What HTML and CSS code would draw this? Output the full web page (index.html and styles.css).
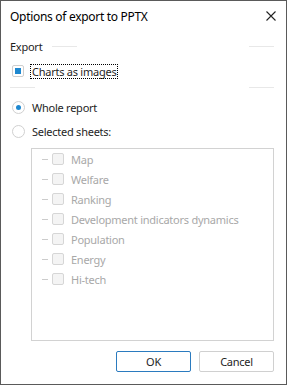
FILE: index.html
```html
<!DOCTYPE html>
<html lang="en">
<head>
    <meta charset="UTF-8">
    <title>Options of export to PPTX</title>
    <link rel="stylesheet" href="styles.css">
</head>
<body>
    <div class="dialog">
        <div class="titlebar">
            <span class="title">Options of export to PPTX</span>
            <svg class="close" width="10" height="10" viewBox="0 0 10 10">
                <path d="M0.5 0.5 L9.5 9.5 M9.5 0.5 L0.5 9.5" stroke="#222" stroke-width="1.1" fill="none"/>
            </svg>
        </div>
        <div class="content">
            <div class="legend">
                <span>Export</span>
                <span class="seg seg-after"></span>
                <span class="fill"></span>
                <span class="seg"></span>
            </div>
            <div class="check-row">
                <span class="check checked"></span>
                <span class="focus">Charts as images</span>
            </div>
            <div class="rule">
                <span class="seg"></span>
                <span class="fill"></span>
                <span class="seg"></span>
            </div>
            <div class="radio-row">
                <span class="radio selected"></span>
                <span>Whole report</span>
            </div>
            <div class="radio-row">
                <span class="radio"></span>
                <span>Selected sheets:</span>
            </div>
            <div class="sheets">
                <div class="sheet"><span class="dash"></span><span class="check"></span>Map</div>
                <div class="sheet"><span class="dash"></span><span class="check"></span>Welfare</div>
                <div class="sheet"><span class="dash"></span><span class="check"></span>Ranking</div>
                <div class="sheet"><span class="dash"></span><span class="check"></span>Development indicators dynamics</div>
                <div class="sheet"><span class="dash"></span><span class="check"></span>Population</div>
                <div class="sheet"><span class="dash"></span><span class="check"></span>Energy</div>
                <div class="sheet"><span class="dash"></span><span class="check"></span>Hi-tech</div>
            </div>
            <div class="buttons">
                <button class="btn default">OK</button>
                <button class="btn">Cancel</button>
            </div>
        </div>
    </div>
</body>
</html>
```

FILE: styles.css
```css
body {
    margin: 0;
    font-family: "Noto Sans", sans-serif;
    font-size: 11px;
    letter-spacing: -0.25px;
    color: #1e1e1e;
    background: #fff;
}
.dialog {
    width: 287px;
    height: 385px;
    box-sizing: border-box;
    border: 1px solid #5a5a5a;
    background: #fff;
}
.titlebar {
    height: 30px;
    display: flex;
    align-items: center;
    padding: 0 10px 0 9px;
}
.title {
    flex: 1;
    font-size: 12px;
    letter-spacing: -0.3px;
    color: #000;
}
.content {
    padding: 0 12px 0 9px;
}
.legend {
    display: flex;
    align-items: center;
    height: 20px;
    margin-top: 5px;
}
.seg {
    width: 25px;
    height: 1px;
    background: #e8e8e8;
}
.seg-after {
    margin-left: 10px;
}
.fill {
    flex: 1;
}
.check-row {
    display: flex;
    align-items: center;
    height: 30px;
    padding-left: 2px;
}
.check {
    width: 10px;
    height: 10px;
    border: 1px solid #cfcfcf;
    border-radius: 2px;
    background: #fff;
    position: relative;
    flex: none;
}
.check.checked::after {
    content: "";
    position: absolute;
    left: 2px;
    top: 2px;
    width: 6px;
    height: 6px;
    background: #1e88d0;
}
.focus {
    margin-left: 7px;
    padding: 0 1px;
    line-height: 13px;
    outline: 1px dotted #000;
}
.rule {
    display: flex;
    padding-top: 1px;
    height: 1px;
    margin-bottom: 7px;
}
.radio-row {
    display: flex;
    align-items: center;
    height: 24px;
    padding-left: 2px;
}
.radio {
    width: 11px;
    height: 11px;
    border: 1px solid #d0d0d0;
    border-radius: 50%;
    margin-right: 7px;
    position: relative;
}
.radio.selected::after {
    content: "";
    position: absolute;
    left: 3px;
    top: 3px;
    width: 5px;
    height: 5px;
    border-radius: 50%;
    background: #1e88d0;
}
.sheets {
    margin: 5px 0 0 21px;
    height: 191px;
    border: 1px solid #d2d2d2;
}
.sheet {
    display: flex;
    align-items: center;
    height: 20px;
    color: #a8a8a8;
    padding-left: 10px;
}
.sheet .check {
    margin-right: 7px;
    background: #f4f4f4;
    border-color: #d6d6d6;
}
.dash {
    width: 6px;
    height: 1px;
    background: #cccccc;
    margin-right: 4px;
}
.buttons {
    display: flex;
    justify-content: flex-end;
    gap: 8px;
    margin-top: 10px;
}
.btn {
    width: 75px;
    height: 21px;
    font-family: inherit;
    font-size: 11px;
    letter-spacing: -0.25px;
    color: #1e1e1e;
    background: #fff;
    border: 1px solid #d0d0d0;
    border-radius: 2px;
    padding: 0;
}
.btn.default {
    border-color: #2b7bbf;
}
```
